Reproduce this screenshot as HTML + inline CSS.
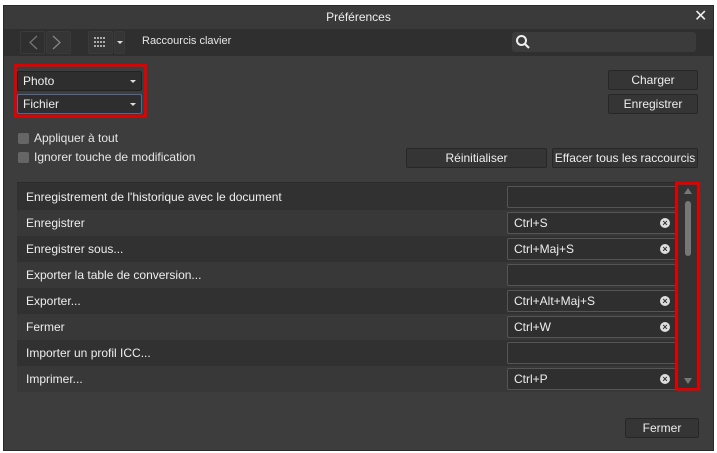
<!DOCTYPE html>
<html><head><style>
*{box-sizing:border-box;margin:0;padding:0}
body{width:717px;height:453px;background:#fff;font-family:"Liberation Sans",sans-serif;font-size:12px;color:#e6e6e6;position:relative;overflow:hidden}
.win{position:absolute;left:3px;top:5px;width:711px;height:446px;background:#3d3d3d;border:1px solid #2a2a2a}
.a{position:absolute}
.btn{position:absolute;background:#353535;border:1px solid #272727;border-radius:2px;text-align:center;color:#eee;line-height:18px}
.dd{position:absolute;left:17px;width:125px;height:20px;background:#2e2e2e;border:1px solid #222;border-radius:2px;padding-left:5px;line-height:18px;color:#eee}
.dd:after{content:"";position:absolute;right:5px;top:8px;border-left:3px solid transparent;border-right:3px solid transparent;border-top:3px solid #ddd}
.cb{position:absolute;left:18px;width:11px;height:11px;background:#666;border-radius:2px}
.row{position:absolute;left:17px;width:661px;height:26px;line-height:26px;padding-left:9px;color:#eee}
.f{position:absolute;left:490px;top:2px;width:171px;height:22px;border:1px solid #555;border-radius:2px;background:#2f2f2f;line-height:20px;padding-left:6px}
.x{position:absolute;right:7px;top:5px;width:10px;height:10px;border-radius:50%;background:#ddd;color:#333;font-size:9px;line-height:10px;text-align:center;font-weight:bold}
</style></head><body>
<div class="win"></div>
<div class="a" style="left:4px;top:6px;width:709px;height:23px;background:#3a3a3a;text-align:center;line-height:23px;color:#eee">Préférences</div>
<div class="a" style="left:694px;top:6px;font-size:16px;line-height:22px;color:#eee">✕</div>
<div class="a" style="left:4px;top:29px;width:709px;height:27px;background:#2f2f2f"></div>
<div class="btn" style="left:20px;top:31px;width:25px;height:23px;background:#2f2f2f;border-color:#3a3a3a"></div>
<div class="btn" style="left:46px;top:31px;width:25px;height:23px;background:#353535;border-color:#3a3a3a"></div>
<svg class="a" style="left:20px;top:31px" width="51" height="23"><polyline points="17,5 10,11.5 17,18" stroke="#777" fill="none" stroke-width="1.2"/><polyline points="55,5 62,11.5 55,18" transform="translate(-2,0)" stroke="#888" fill="none" stroke-width="1.2"/><polyline points="33,5 40,11.5 33,18" stroke="#888" fill="none" stroke-width="1.2"/></svg>
<div class="btn" style="left:88px;top:31px;width:25px;height:23px;border-color:#3a3a3a"></div>
<svg class="a" style="left:88px;top:31px" width="25" height="23"><g fill="#aaa"><rect x="6" y="6" width="2" height="2"/><rect x="9" y="6" width="2" height="2"/><rect x="12" y="6" width="2" height="2"/><rect x="15" y="6" width="2" height="2"/><rect x="6" y="10" width="2" height="2"/><rect x="9" y="10" width="2" height="2"/><rect x="12" y="10" width="2" height="2"/><rect x="15" y="10" width="2" height="2"/><rect x="6" y="14" width="2" height="2"/><rect x="9" y="14" width="2" height="2"/><rect x="12" y="14" width="2" height="2"/><rect x="15" y="14" width="2" height="2"/></g></svg>
<div class="btn" style="left:114px;top:31px;width:11px;height:23px;border-color:#3a3a3a"></div>
<div class="a" style="left:117px;top:41px;border-left:3px solid transparent;border-right:3px solid transparent;border-top:3px solid #ddd"></div>
<div class="a" style="left:142px;top:35px;font-size:11px">Raccourcis clavier</div>
<div class="a" style="left:512px;top:32px;width:184px;height:20px;background:#3b3b3b;border-radius:3px"></div>
<svg class="a" style="left:515px;top:34px" width="16" height="16"><circle cx="6.5" cy="6.5" r="4.5" stroke="#eee" stroke-width="2" fill="none"/><line x1="10" y1="10" x2="14" y2="14" stroke="#eee" stroke-width="2.2"/></svg>
<div class="dd" style="top:71px">Photo</div>
<div class="dd" style="top:94px;border-color:#4b6a9a">Fichier</div>
<div class="a" style="left:14px;top:64px;width:133px;height:54px;border:3px solid #e00000"></div>
<div class="cb" style="top:133px"></div><div class="a" style="left:34px;top:131px">Appliquer à tout</div>
<div class="cb" style="top:152px"></div><div class="a" style="left:34px;top:150px">Ignorer touche de modification</div>
<div class="btn" style="left:608px;top:70px;width:90px;height:20px">Charger</div>
<div class="btn" style="left:608px;top:94px;width:90px;height:20px">Enregistrer</div>
<div class="btn" style="left:406px;top:148px;width:141px;height:20px">Réinitialiser</div>
<div class="btn" style="left:552px;top:148px;width:146px;height:20px">Effacer tous les raccourcis</div>
<div class="a" style="left:17px;top:182px;width:683px;height:209px;background:#333;border:1px solid #2a2a2a"></div>
<div class="row" style="top:184px;background:#313131">Enregistrement de l'historique avec le document<div class="f"></div></div>
<div class="row" style="top:210px;background:#383838">Enregistrer<div class="f">Ctrl+S<span class="x">×</span></div></div>
<div class="row" style="top:236px;background:#313131">Enregistrer sous...<div class="f">Ctrl+Maj+S<span class="x">×</span></div></div>
<div class="row" style="top:262px;background:#383838">Exporter la table de conversion...<div class="f"></div></div>
<div class="row" style="top:288px;background:#313131">Exporter...<div class="f">Ctrl+Alt+Maj+S<span class="x">×</span></div></div>
<div class="row" style="top:314px;background:#383838">Fermer<div class="f">Ctrl+W<span class="x">×</span></div></div>
<div class="row" style="top:340px;background:#313131">Importer un profil ICC...<div class="f"></div></div>
<div class="row" style="top:366px;background:#383838">Imprimer...<div class="f">Ctrl+P<span class="x">×</span></div></div>
<div class="a" style="left:684px;top:188px;border-left:4px solid transparent;border-right:4px solid transparent;border-bottom:6px solid #777"></div>
<div class="a" style="left:685px;top:201px;width:6px;height:55px;background:#777;border-radius:3px"></div>
<div class="a" style="left:684px;top:378px;border-left:4px solid transparent;border-right:4px solid transparent;border-top:6px solid #777"></div>
<div class="a" style="left:675px;top:182px;width:25px;height:209px;border:3px solid #e00000"></div>
<div class="btn" style="left:625px;top:418px;width:74px;height:20px">Fermer</div>
</body></html>
